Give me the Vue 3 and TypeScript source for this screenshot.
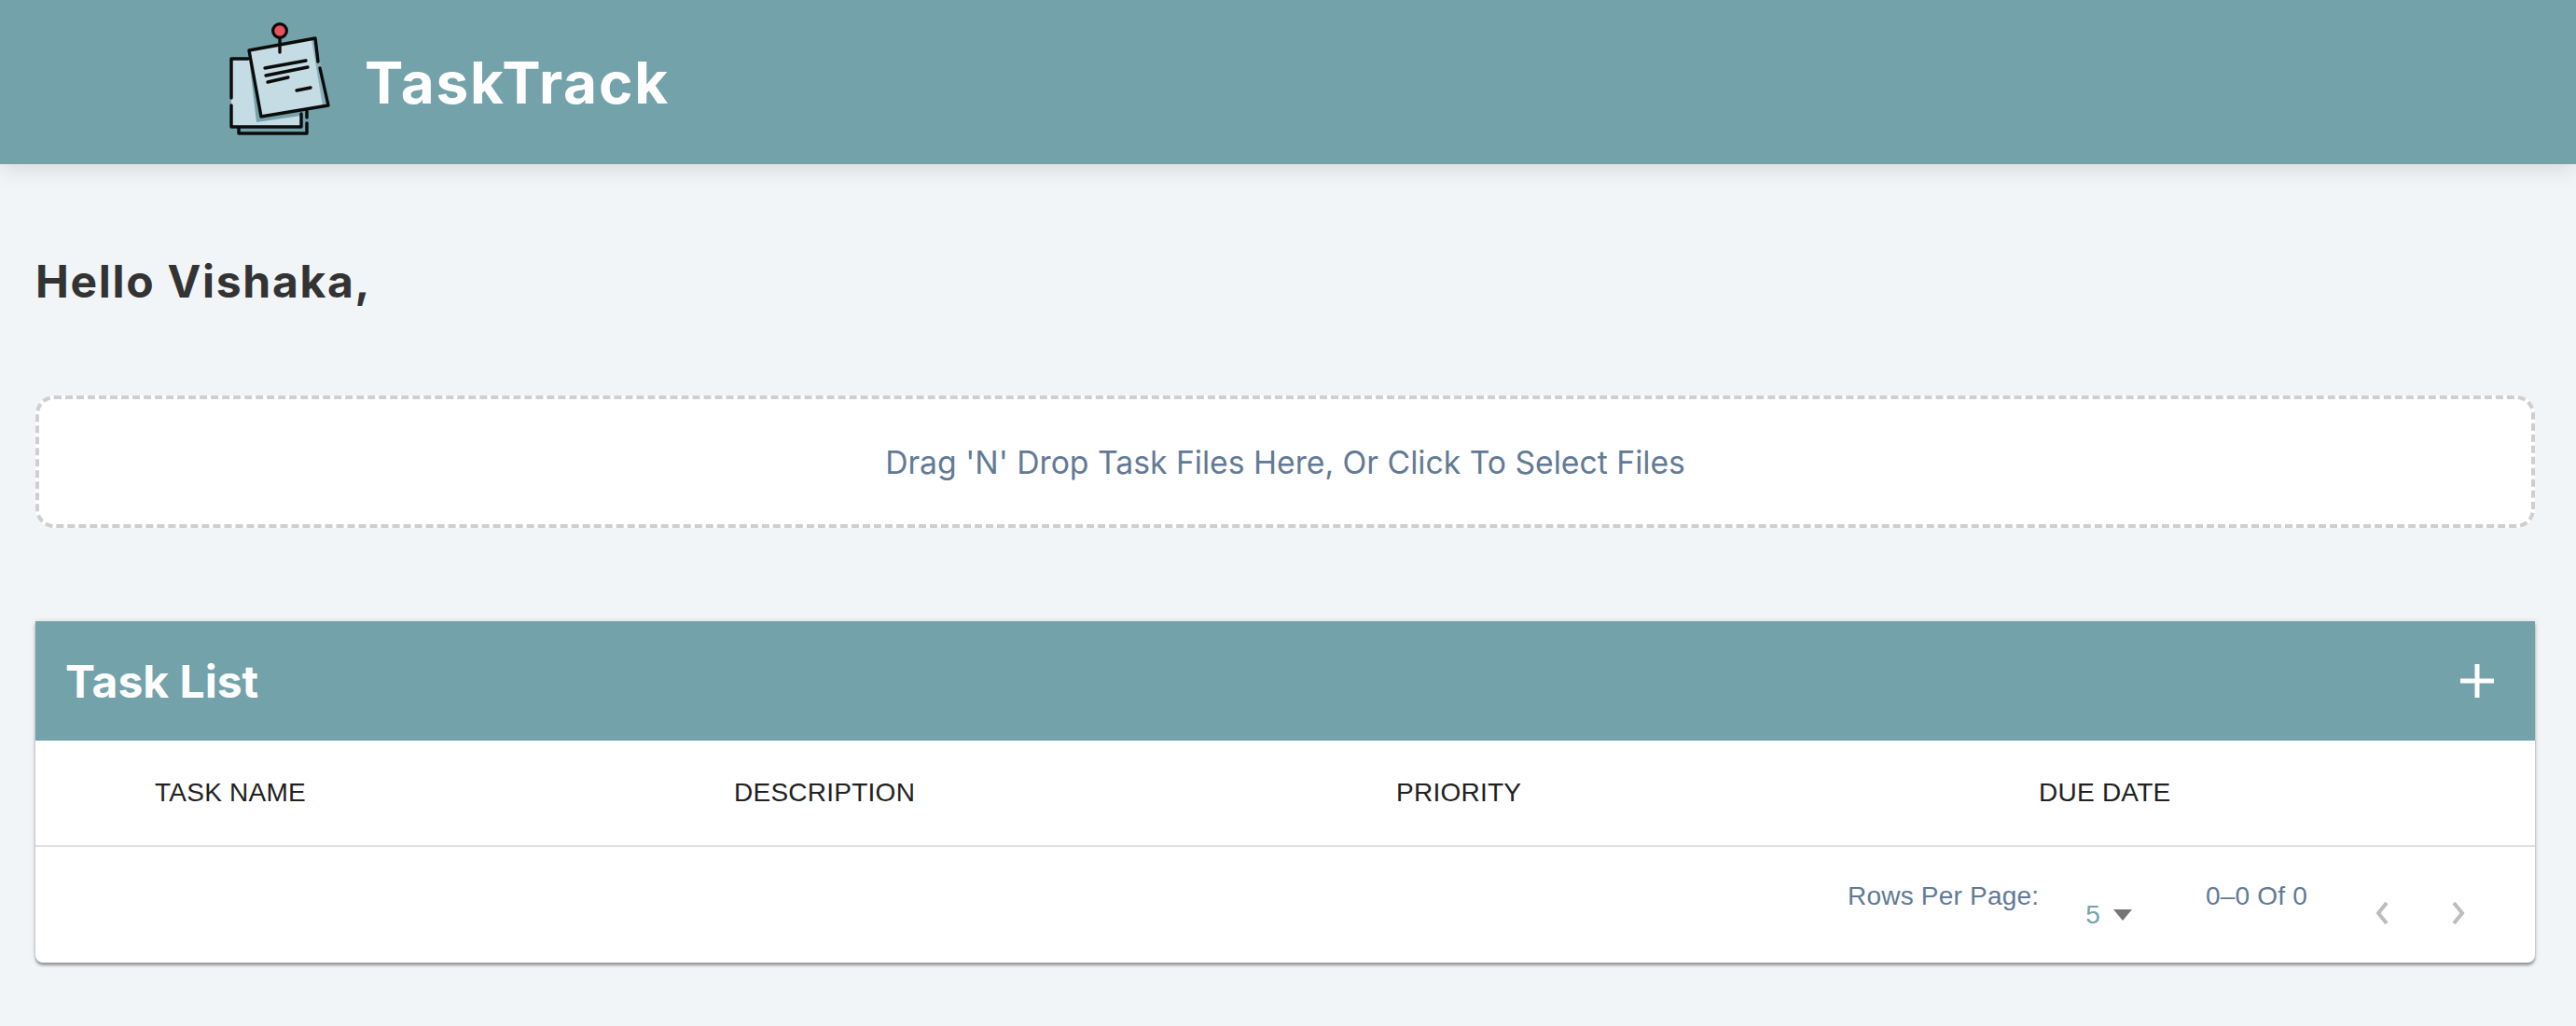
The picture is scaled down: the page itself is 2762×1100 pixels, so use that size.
<script setup lang="ts">
const columns = ['Task Name', 'Description', 'Priority', 'Due Date'];
</script>

<template>
  <div class="page">
    <header class="topbar">
      <svg class="logo" viewBox="0 0 130 135" width="130" height="135">
        <path d="M13 47H88V120H13Z" fill="#c5dce5" />
        <path d="M32 47L45 109L88 102V108L40 115Z" fill="#74a2ab" />
        <path d="M32 38L103 25L117 97L45 109Z" fill="#c5dce5" />
        <path d="M103 25L117 97L111 98L99 26Z" fill="#74a2ab" opacity=".75" />
        <g fill="none" stroke="#0b0b0b" stroke-width="3.4" stroke-linecap="round" stroke-linejoin="round">
          <path d="M31 47H13V89M13 97V120H88V106M94 103V110M94 116V127H21V120" />
          <path d="M106 50L103 25L32 38L45 109L117 97L108 57" />
          <path d="M49 57L93 49M50 65L95 56M52 72L74 67M83 81L98 78" />
          <path d="M65 25V40" />
        </g>
        <circle cx="65" cy="17" r="7.4" fill="#e8505f" stroke="#0b0b0b" stroke-width="3.2" />
      </svg>
      <span class="brand">TaskTrack</span>
    </header>

    <main class="content">
      <h1 class="greeting">Hello Vishaka,</h1>

      <div class="dropzone">Drag 'N' Drop Task Files Here, Or Click To Select Files</div>

      <section class="card">
        <div class="card-head">
          <h2>Task List</h2>
          <svg class="plus" viewBox="0 0 36 36" width="36" height="36">
            <path d="M15.5 0H20.5V15.5H36V20.5H20.5V36H15.5V20.5H0V15.5H15.5Z" fill="#fff" />
          </svg>
        </div>

        <div class="columns">
          <span v-for="col in columns" :key="col">{{ col }}</span>
        </div>

        <div class="pagination">
          <span class="rows-label">Rows Per Page:</span>
          <span class="rows-select">5<i class="caret"></i></span>
          <span class="range">0–0 Of 0</span>
          <span class="arrows">
            <svg viewBox="0 0 16 26" width="16" height="26"><path d="M13 2L4 13L13 24" /></svg>
            <svg viewBox="0 0 16 26" width="16" height="26"><path d="M3 2L12 13L3 24" /></svg>
          </span>
        </div>
      </section>
    </main>
  </div>
</template>

<style>
html,
body {
  margin: 0;
  background: #f1f5f8;
}
</style>

<style scoped>
.page {
  height: 1100px;
  overflow: hidden;
  background: #f1f5f8;
  font-family: Inter, 'Liberation Sans', sans-serif;
}

.topbar {
  height: 176px;
  display: flex;
  align-items: center;
  padding-left: 235px;
  background: #74a2ab;
  box-shadow: 0 4px 24px rgba(0, 0, 0, 0.12);
}

.logo {
  margin-top: -9px;
}

.brand {
  margin-left: 26px;
  color: #fff;
  font-size: 62px;
  font-weight: 700;
  letter-spacing: 1.8px;
}

.content {
  padding: 0 44px 0 38px;
}

.greeting {
  margin: 0;
  padding-top: 91px;
  height: 152px;
  box-sizing: border-box;
  line-height: 70px;
  color: #333;
  font-size: 48px;
  font-weight: 700;
  letter-spacing: 1.7px;
}

.dropzone {
  height: 142px;
  margin-top: 96px;
  box-sizing: border-box;
  display: flex;
  align-items: center;
  justify-content: center;
  background: #fff;
  border: 4px dashed #cfcfcf;
  border-radius: 20px;
  color: #627a96;
  font-size: 33.7px;
}

.card {
  margin-top: 100px;
  height: 366px;
  background: #fff;
  border-radius: 0 0 8px 8px;
  box-shadow: 0 3px 3px rgba(0, 0, 0, 0.35), 0 0 6px rgba(0, 0, 0, 0.12);
}

.card-head {
  height: 128px;
  display: flex;
  align-items: center;
  justify-content: space-between;
  padding: 0 44px 0 32px;
  background: #74a2ab;
}

.card-head h2 {
  margin: 0;
  color: #fff;
  font-size: 48px;
  font-weight: 700;
}

.plus {
  display: block;
}

.columns {
  height: 112px;
  display: grid;
  grid-template-columns: 621px 710px 689px 1fr;
  align-items: center;
  padding-left: 128px;
  border-bottom: 2px solid #e0e0e0;
  color: #212121;
  font-family: 'Liberation Sans', Arial, sans-serif;
  font-size: 28px;
  letter-spacing: 0.25px;
  text-transform: uppercase;
}

.pagination {
  display: flex;
  justify-content: flex-end;
  align-items: flex-start;
  padding-right: 74px;
  color: #627a96;
  font-family: 'Liberation Sans', Arial, sans-serif;
  font-size: 28px;
  letter-spacing: 0.2px;
}

.rows-label {
  margin-top: 37px;
}

.rows-select {
  display: flex;
  align-items: center;
  margin: 57px 0 0 50px;
  color: #74a2ab;
}

.caret {
  width: 0;
  height: 0;
  margin-left: 14px;
  border-style: solid;
  border-width: 12px 10px 0;
  border-color: #757575 transparent transparent;
}

.range {
  margin: 37px 0 0 79px;
}

.arrows {
  display: flex;
  gap: 66px;
  margin: 58px 0 0 72px;
}

.arrows path {
  fill: none;
  stroke: #bdbdbd;
  stroke-width: 4;
}
</style>
